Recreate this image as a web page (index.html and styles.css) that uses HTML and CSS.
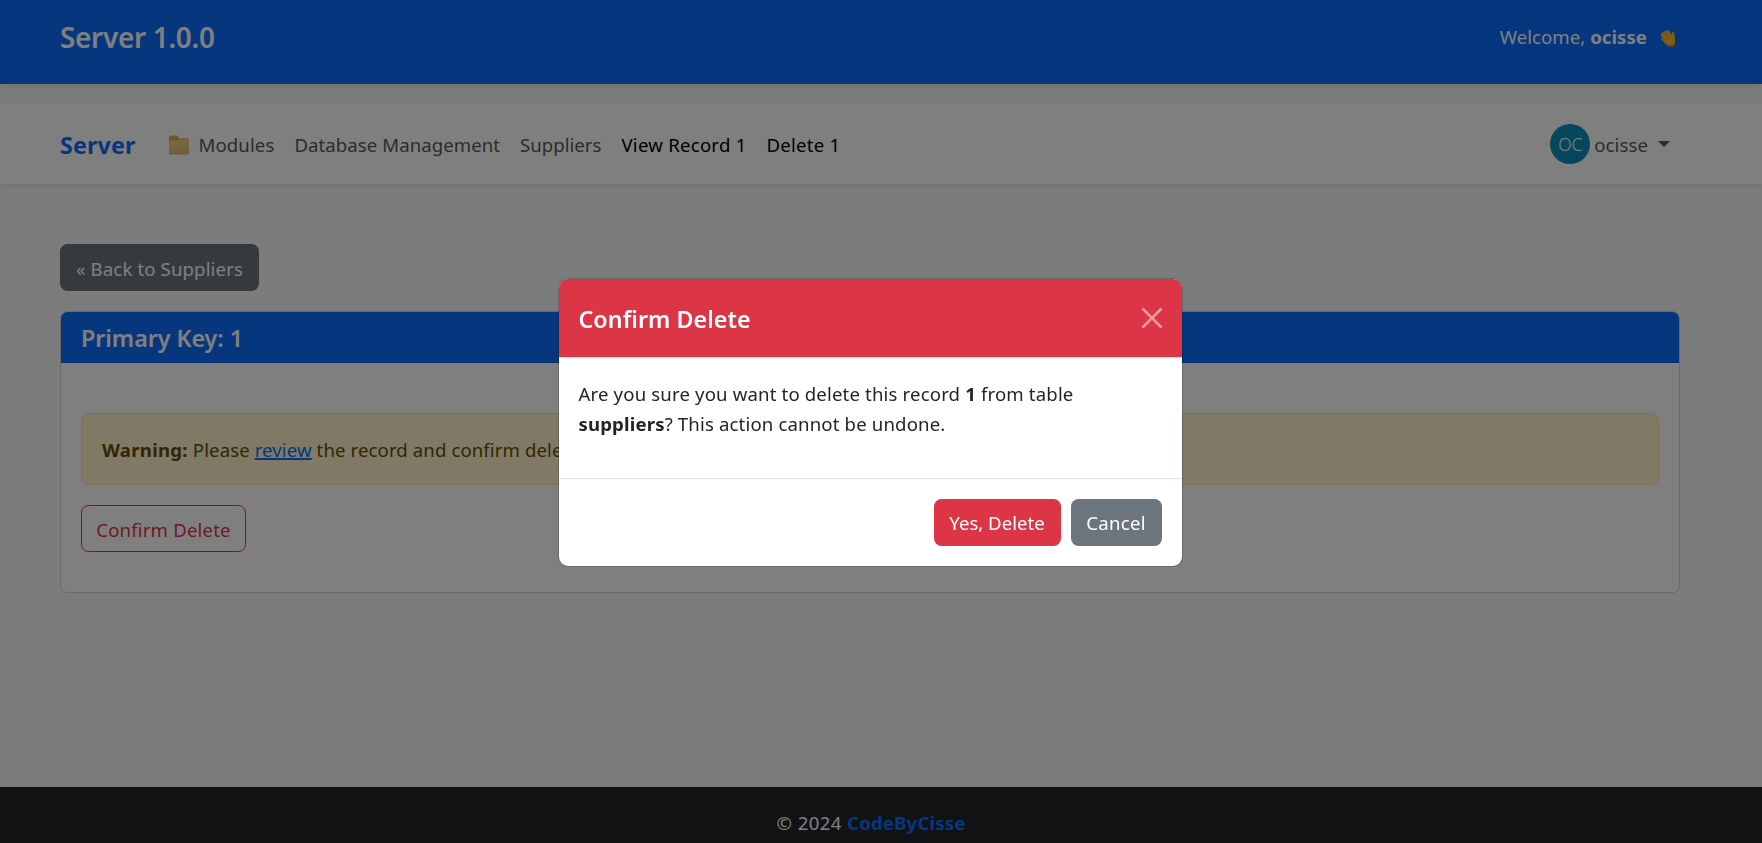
FILE: index.html
```
<!DOCTYPE html>
<html lang="en">
<head>
<meta charset="utf-8">
<title>Delete 1</title>
<link rel="stylesheet" href="styles.css">
</head>
<body>
<div class="page">
  <header class="topbar">
    <h1 class="topbar-title">Server 1.0.0</h1>
    <div class="welcome"><span class="welcome-text">Welcome, <b>ocisse</b></span>
      <svg class="wave" width="16" height="22" viewBox="0 0 16 22"><path d="M3.200 7.500C2.600 6.200 3.800 5.200 4.800 6.200L5.500 7C4.800 5.500 6.200 4 7.400 5.200C7.800 3.600 9.200 3.600 9.900 4.900L12.800 9.300C12.600 7.200 12.700 5.800 14 6C15.400 6.300 15.200 8.500 16 10.500V19C13.500 21.400 9.500 20.800 6.800 18L2.500 13.600C1.600 12.400 2.600 11.200 3.700 12L2.200 10.200C1.400 8.800 2.200 7.600 3.200 7.500Z" fill="#ffb92e"/><path d="M4.300 7.500L8.600 12.400M7 6L10.600 11M3.600 11.800L7 15" stroke="#d6861c" stroke-width=".8" fill="none"/><path d="M16 16.500V19C13.500 21.400 9.500 20.800 6.800 18C10.500 20 13.500 19.200 16 16.500Z" fill="#e08f20"/><path d="M.6 14.500Q1.200 16.800 3.200 18M10.500 2.200Q12.500 2.300 13.500 4" stroke="#1c7fc0" stroke-width="1" fill="none"/></svg>
    </div>
  </header>
  <nav class="navbar">
    <a class="brand">Server</a>
    <ul class="links">
      <li class="link modules"><svg width="20" height="20" viewBox="0 0 20 20"><defs><linearGradient id="folder" x1="0" y1="0" x2="0" y2="1"><stop offset="0" stop-color="#f2d080"/><stop offset=".6" stop-color="#ecc87c"/><stop offset="1" stop-color="#e6aa86"/></linearGradient></defs><path d="M0 2Q0 .5 1.500 .5H7Q8 .5 8.600 1.200L10.500 3.500H18.500Q20 3.500 20 5V10H0Z" fill="#dcac5c"/><path d="M0 7Q0 5.500 1.500 5.500H8L10.500 4.500H18.500Q20 4.500 20 6V18Q20 19.500 18.500 19.500H1.500Q0 19.500 0 18Z" fill="url(#folder)"/></svg><span>Modules</span></li>
      <li class="link database">Database Management</li>
      <li class="link suppliers">Suppliers</li>
      <li class="link active">View Record 1</li>
      <li class="link active delete">Delete 1</li>
    </ul>
    <div class="user"><span class="avatar">OC</span><span>ocisse</span><i class="caret"></i></div>
  </nav>
  <main class="content">
    <a class="btn btn-secondary back">« Back to Suppliers</a>
    <section class="card">
      <h2 class="card-header">Primary Key: 1</h2>
      <div class="card-body">
        <div class="alert"><b>Warning:</b> Please <a class="review">review</a> the record and confirm deletion.</div>
        <button class="btn btn-outline">Confirm Delete</button>
      </div>
    </section>
  </main>
  <footer class="footer">© 2024 <b>CodeByCisse</b></footer>
</div>
<div class="backdrop">
  <div class="modal">
    <div class="modal-header">
      <h2 class="modal-title">Confirm Delete</h2>
      <svg class="close" width="20" height="20" viewBox="0 0 16 16"><path d="M.293.293a1 1 0 0 1 1.414 0L8 6.586 14.293.293a1 1 0 1 1 1.414 1.414L9.414 8l6.293 6.293a1 1 0 0 1-1.414 1.414L8 9.414l-6.293 6.293a1 1 0 0 1-1.414-1.414L6.586 8 .293 1.707a1 1 0 0 1 0-1.414z" fill="#fff"/></svg>
    </div>
    <div class="modal-body">Are you sure you want to delete this record <b>1</b> from table <b>suppliers</b>? This action cannot be undone.</div>
    <div class="modal-footer">
      <button class="btn btn-danger">Yes, Delete</button>
      <button class="btn btn-secondary cancel">Cancel</button>
    </div>
  </div>
</div>
</body>
</html>
```
FILE: styles.css
```
* { box-sizing: border-box; }
body {
  margin: 0;
  font: 18.6px/30px "Noto Sans", sans-serif;
  color: #212529;
  background: #f8f9fa;
  overflow: hidden;
}
h1, h2, ul { margin: 0; padding: 0; list-style: none; }
.page { height: 843px; display: flex; flex-direction: column; }

.topbar {
  height: 84px;
  flex: none;
  padding: 19px 87px 0 60px;
  display: flex;
  justify-content: space-between;
  align-items: flex-start;
  color: #fff;
  background: #0d6efd;
  box-shadow: 0 3px 5px rgba(0, 0, 0, .075);
}
.topbar-title { font-size: 27.9px; line-height: 36px; font-weight: 600; letter-spacing: -.28px; }
.welcome { display: flex; align-items: center; padding-top: 3px; letter-spacing: .04px; }
.wave { margin-left: 12px; }

.navbar {
  height: 80px;
  flex: none;
  margin-top: 20px;
  padding: 2px 92px 0 60px;
  display: flex;
  align-items: center;
  background: #fff;
  box-shadow: 0 2px 5px rgba(0, 0, 0, .1);
}
.brand { width: 99px; font-size: 23.25px; font-weight: 700; letter-spacing: .15px; color: #0d6efd; }
.links { display: flex; }
.link { padding: 0 10px; color: #595959; letter-spacing: .1px; }
.modules { display: flex; align-items: center; gap: 9.5px; }
.modules svg { margin-top: -1px; }
.database { letter-spacing: .06px; }
.suppliers { letter-spacing: .02px; }
.active { color: #000; letter-spacing: .24px; }
.user { margin-left: auto; display: flex; align-items: center; color: #595959; letter-spacing: .1px; }
.avatar {
  width: 40px;
  height: 40px;
  margin: -2px 4px 0 0;
  border-radius: 50%;
  background: #0a8fbb;
  color: #fff;
  font-size: 17.5px;
  font-weight: 300;
  line-height: 40px;
  letter-spacing: -.4px;
  text-align: center;
}
.caret { margin: -2px 0 0 10px; border: 6px solid transparent; border-top-color: #595959; border-bottom: 0; }

.content { flex: 1; padding: 60px 82px 0 60px; }
.btn {
  display: inline-block;
  height: 47px;
  padding: 8px 15px;
  border: 1px solid transparent;
  border-radius: 7.5px;
  font: inherit;
  line-height: 30px;
  color: #fff;
  white-space: nowrap;
}
.btn-secondary { background: #6c757d; }
.btn-danger { width: 127px; padding: 8px 0; background: #dc3545; }
.btn-outline { width: 165px; padding: 9px 0 7px; letter-spacing: .17px; border-color: #dc3545; color: #dc3545; background: none; }
.back { width: 199px; padding: 9px 15px 7px; letter-spacing: .13px; }
.card { margin-top: 20px; height: 282px; border: 1px solid #d2d2d2; border-radius: 7.5px; background: #fff; overflow: hidden; }
.card-header {
  height: 51px;
  padding: 11px 20px 0;
  font-size: 23.25px;
  line-height: 30px;
  font-weight: 600;
  letter-spacing: -.04px;
  color: #fff;
  background: #0d6efd;
  border-bottom: 1px solid #0b5fda;
}
.card-body { padding: 50px 20px 0 20px; }
.alert {
  height: 72px;
  margin-bottom: 20px;
  padding: 21px 20px 0;
  border: 1px solid #ffe69c;
  border-radius: 7.5px;
  background: #fff3cd;
  color: #664d03;
  letter-spacing: .1px;
}
.alert b { letter-spacing: .26px; }
.review { color: #0d6efd; text-decoration: underline; text-decoration-thickness: 2px; text-underline-offset: 1px; }
.footer { height: 56px; flex: none; padding: 21px 20px 0 0; text-align: center; letter-spacing: .4px; color: #fff; background: #212529; }
.footer b { color: #0d6efd; letter-spacing: .16px; }

.backdrop {
  position: fixed;
  inset: 0;
  display: flex;
  justify-content: center;
  align-items: center;
  padding: 1px 22px 0 0;
  background: rgba(0, 0, 0, .5);
}
.modal {
  width: 625px;
  height: 289px;
  border: 1px solid rgba(0, 0, 0, .175);
  border-radius: 10px;
  background: #fff;
  background-clip: padding-box;
  display: flex;
  flex-direction: column;
}
.modal-header {
  height: 79px;
  padding: 0 20px;
  display: flex;
  align-items: center;
  justify-content: space-between;
  border-bottom: 1px solid #dee2e6;
  border-radius: 9px 9px 0 0;
  color: #fff;
  background: #dc3545;
}
.modal-title { padding-top: 2px; font-size: 23.25px; font-weight: 600; letter-spacing: .04px; }
.close { opacity: .5; }
.modal-body { flex: 1; padding: 21px 20px; letter-spacing: .15px; }
.modal-footer { height: 88px; padding: 20px; display: flex; justify-content: flex-end; gap: 10px; border-top: 1px solid #dee2e6; }
.cancel { width: 91px; padding: 8px 0; letter-spacing: .3px; }
```
